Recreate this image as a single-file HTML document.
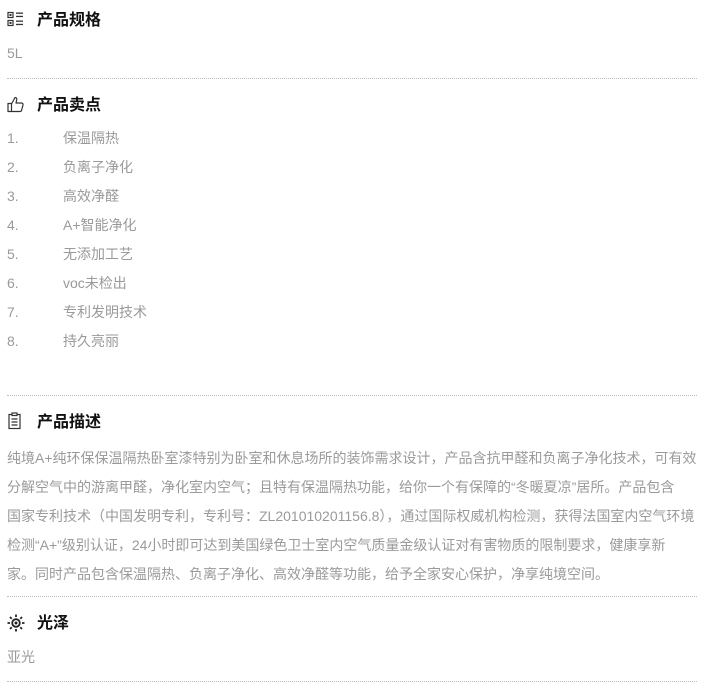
<!DOCTYPE html>
<html><head><meta charset="utf-8"><style>
html,body{margin:0;padding:0;background:#fff;}
body{width:704px;height:686px;position:relative;overflow:hidden;font-family:"Liberation Sans","WenQuanYi Zen Hei","Noto Sans CJK SC",sans-serif;}
.t{position:absolute;left:37px;font-size:16px;font-weight:bold;color:#111;line-height:20px;}
.ic{position:absolute;left:7px;}
.g{position:absolute;color:#9a9a9a;font-size:14px;line-height:16px;white-space:nowrap;}
.hr{position:absolute;left:7px;width:690px;border-top:1px dotted #bbb;height:0;}
.d{position:absolute;left:7px;top:444px;color:#9a9a9a;font-size:14px;line-height:29px;white-space:nowrap;}
</style></head><body>
<svg class="ic" style="top:11px" width="18" height="16" viewBox="0 0 18 16"><g fill="none" stroke="#333" stroke-width="1.2"><rect x="1" y="1.5" width="5" height="5"/><rect x="1" y="9.5" width="5" height="5"/></g><g fill="#333"><rect x="2.5" y="3" width="2" height="2"/><rect x="2.5" y="11" width="2" height="2"/><rect x="9" y="1.5" width="7" height="1.3"/><rect x="9" y="4.8" width="7" height="1.3"/><rect x="9" y="9.5" width="7" height="1.3"/><rect x="9" y="12.8" width="7" height="1.3"/></g></svg>
<div class="t" style="top:11px">产品规格</div>
<div class="g" style="left:7px;top:45px">5L</div>
<div class="hr" style="top:78px"></div>

<svg class="ic" style="top:96px" width="18" height="17" viewBox="0 0 18 17"><path d="M1 7.5h3.5v8H1z M4.5 8l3.5-6.5c1.5 0 2 1 1.7 2.5L9 7h5.5c1.2 0 1.8 1 1.5 2l-1.5 5.5c-.3.8-.8 1-1.5 1H4.5" fill="none" stroke="#333" stroke-width="1.2" stroke-linejoin="round"/></svg>
<div class="t" style="top:96px">产品卖点</div>
<div class="g" style="left:7px;top:130px">1.</div><div class="g" style="left:63px;top:130px">保温隔热</div>
<div class="g" style="left:7px;top:159px">2.</div><div class="g" style="left:63px;top:159px">负离子净化</div>
<div class="g" style="left:7px;top:188px">3.</div><div class="g" style="left:63px;top:188px">高效净醛</div>
<div class="g" style="left:7px;top:217px">4.</div><div class="g" style="left:63px;top:217px">A+智能净化</div>
<div class="g" style="left:7px;top:246px">5.</div><div class="g" style="left:63px;top:246px">无添加工艺</div>
<div class="g" style="left:7px;top:275px">6.</div><div class="g" style="left:63px;top:275px">voc未检出</div>
<div class="g" style="left:7px;top:304px">7.</div><div class="g" style="left:63px;top:304px">专利发明技术</div>
<div class="g" style="left:7px;top:333px">8.</div><div class="g" style="left:63px;top:333px">持久亮丽</div>
<div class="hr" style="top:395px"></div>

<svg class="ic" style="top:412px" width="16" height="18" viewBox="0 0 16 18"><g fill="none" stroke="#333" stroke-width="1.2"><rect x="2" y="2.5" width="11" height="14"/><rect x="5" y="1" width="5" height="2.5" fill="#fff"/><path d="M4.5 7h6M4.5 10h6M4.5 13h6"/></g></svg>
<div class="t" style="top:413px">产品描述</div>
<div class="d">纯境A+纯环保保温隔热卧室漆特别为卧室和休息场所的装饰需求设计，产品含抗甲醛和负离子净化技术，可有效<br>分解空气中的游离甲醛，净化室内空气；且特有保温隔热功能，给你一个有保障的“冬暖夏凉”居所。产品包含<br>国家专利技术（中国发明专利，专利号：ZL201010201156.8），通过国际权威机构检测，获得法国室内空气环境<br>检测“A+”级别认证，24小时即可达到美国绿色卫士室内空气质量金级认证对有害物质的限制要求，健康享新<br>家。同时产品包含保温隔热、负离子净化、高效净醛等功能，给予全家安心保护，净享纯境空间。</div>
<div class="hr" style="top:596px"></div>

<svg class="ic" style="top:614px" width="18" height="18" viewBox="0 0 18 18"><g fill="none" stroke="#222" stroke-width="1.8"><circle cx="9" cy="9" r="3.8"/><path d="M9 0.5v2.5M9 15v2.5M0.5 9h2.5M15 9h2.5M3 3l1.7 1.7M13.3 13.3l1.7 1.7M3 15l1.7-1.7M13.3 4.7l1.7-1.7"/></g><circle cx="9" cy="9" r="1.5" fill="#222"/></svg>
<div class="t" style="top:614px">光泽</div>
<div class="g" style="left:7px;top:649px">亚光</div>
<div class="hr" style="top:681px"></div>
</body></html>
